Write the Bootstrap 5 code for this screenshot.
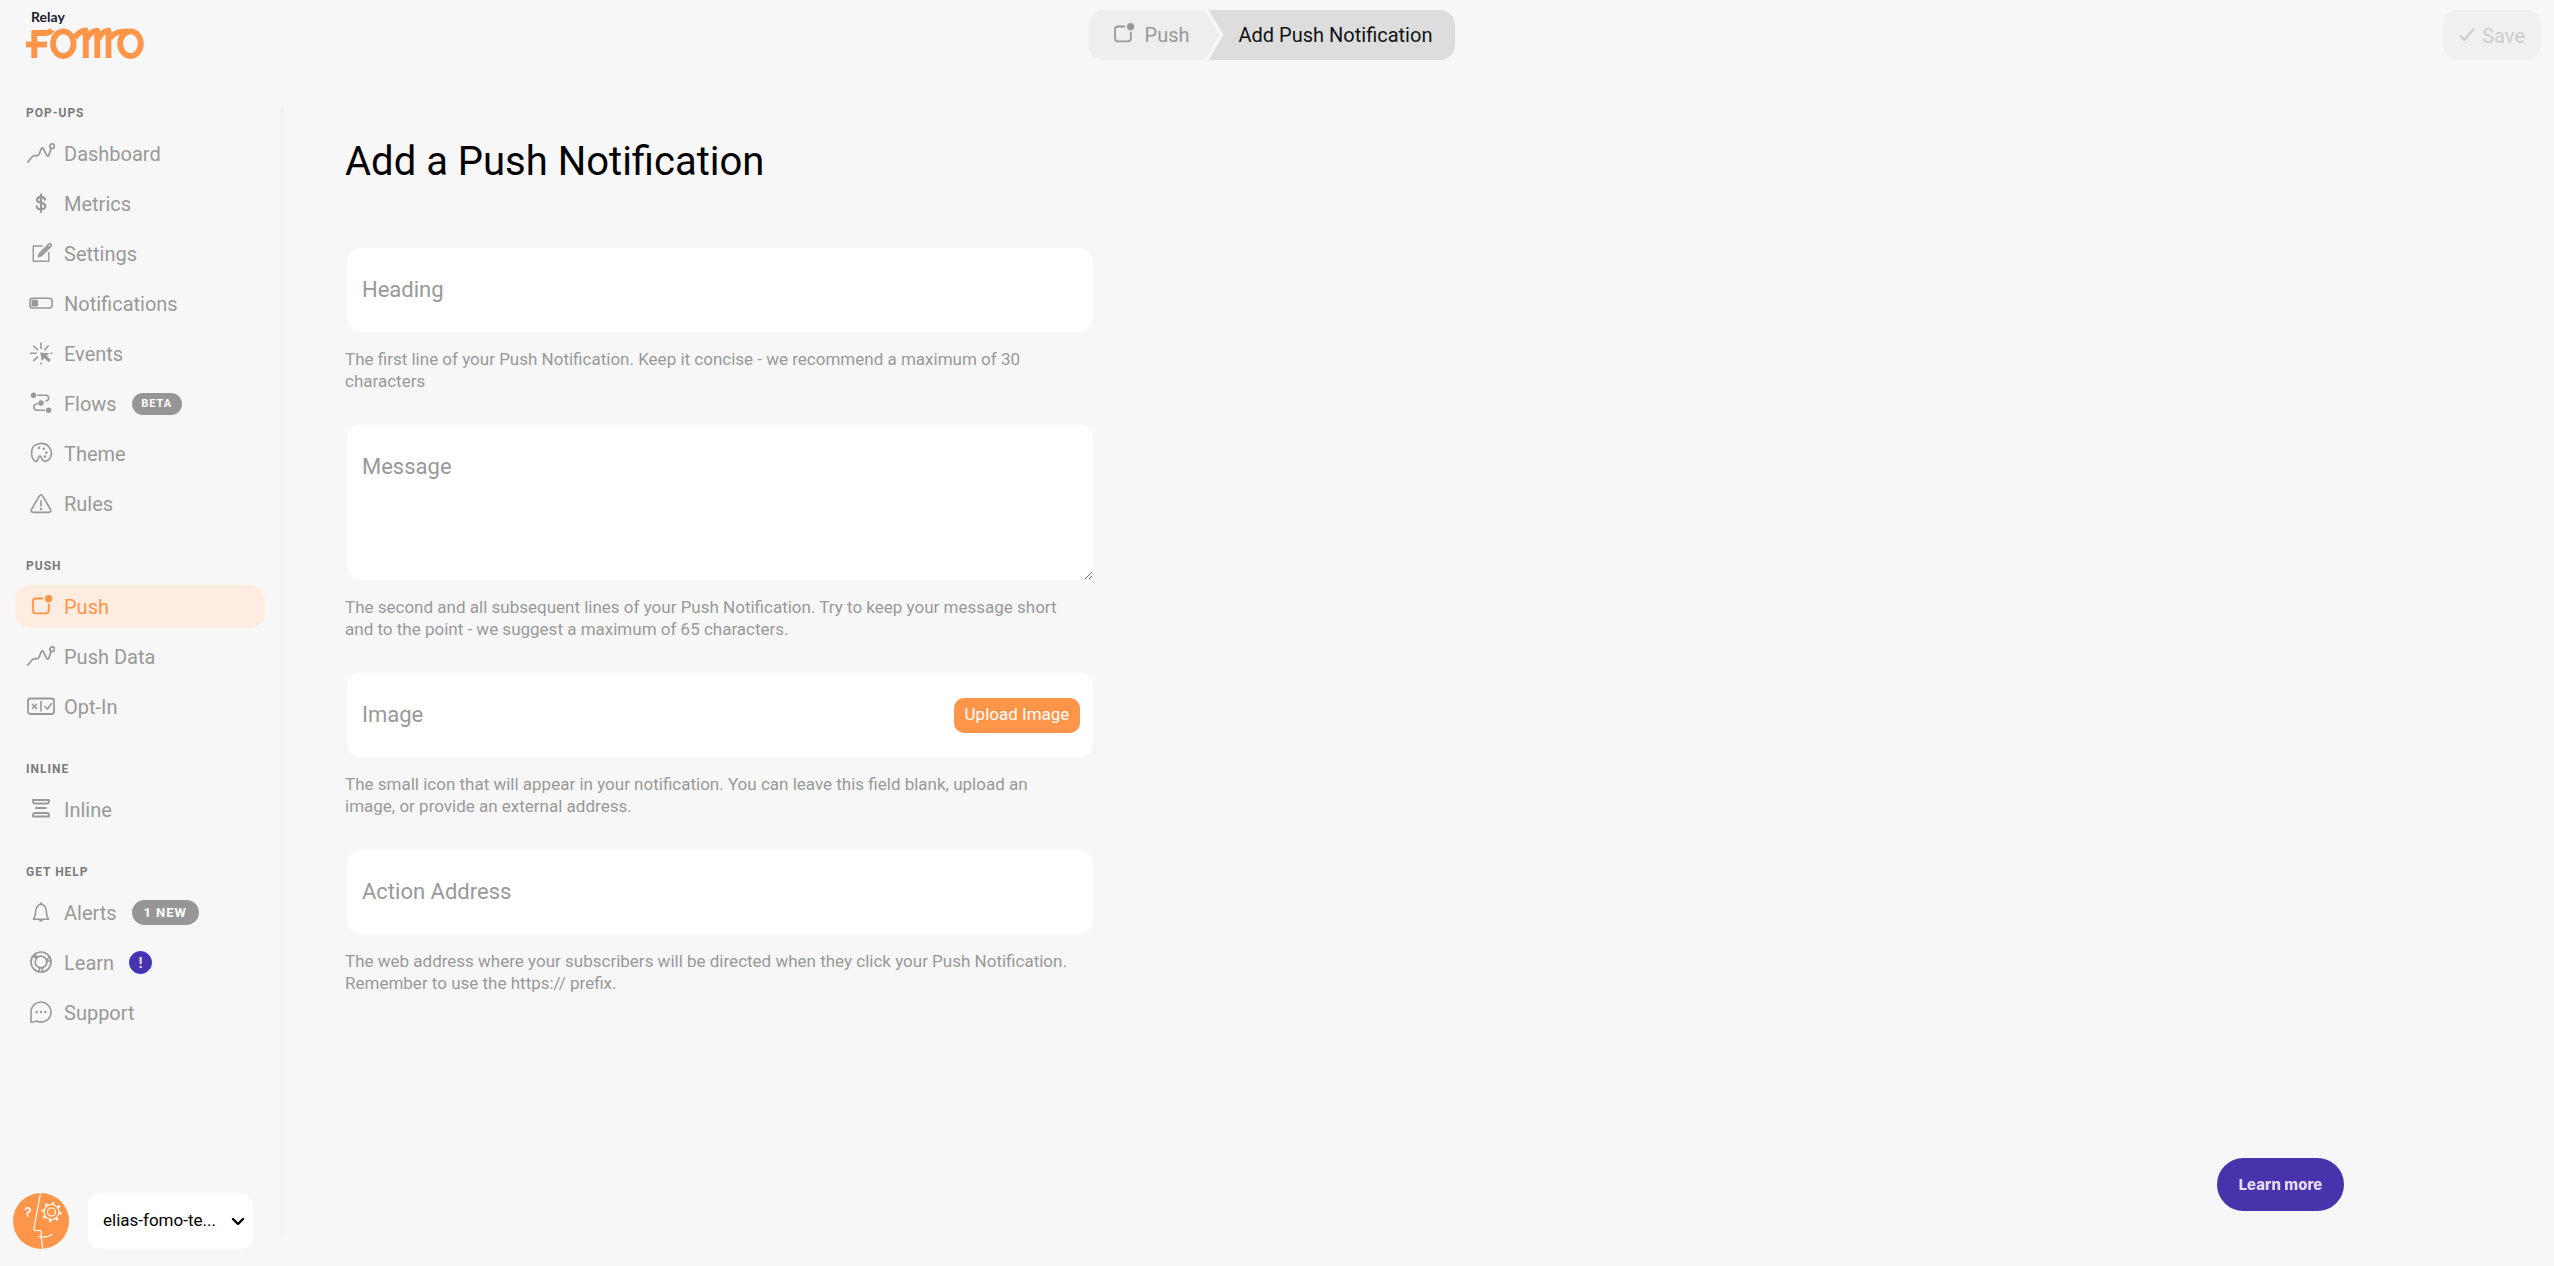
<!DOCTYPE html>
<html lang="en">
<head>
<meta charset="utf-8">
<meta name="viewport" content="width=device-width, initial-scale=1">
<title>Add Push Notification</title>
<link rel="stylesheet" href="https://cdn.jsdelivr.net/npm/bootstrap@5.3.0/dist/css/bootstrap.min.css">
<style>
  :root { --page: #f7f7f7; --muted: #999; --brand: #ff9549; --violet: #4733ac; }
  body { background: var(--page); color: #000; font-family: Roboto, "Liberation Sans", sans-serif; font-size: 20px; }
  svg { fill: none; stroke: currentColor; stroke-width: 2; stroke-linecap: round; stroke-linejoin: round; flex: none; overflow: visible; }
  .solid { fill: currentColor; stroke: none; }

  .topbar { display: grid; grid-template-columns: 1fr auto 1fr; align-items: start; height: 75px; padding: 10px 13px 0 3px; border-bottom: 2px solid #f2f2f2; }
  .brand-link { padding-left: 23px; width: max-content; color: #1b1b2b; }
  .brand-sub { font: 700 14px/14px Lato, sans-serif; padding-left: 5px; }
  .brand-link svg { display: block; color: var(--brand); margin-top: 3px; }

  .crumb { display: flex; align-items: center; height: 50px; line-height: 50px; text-decoration: none; }
  .crumb-parent { color: var(--muted); background: #eee; padding: 0 30px 0 23px; gap: 7px; border-radius: 15px 0 0 15px; clip-path: polygon(0 0, calc(100% - 15px) 0, 100% 50%, calc(100% - 15px) 100%, 0 100%); }
  .crumb-current { color: #111; background: #ddd; margin-left: -11px; padding: 0 23px 0 30px; border-radius: 0 15px 15px 0; clip-path: polygon(0 0, 100% 0, 100% 100%, 0 100%, 15px 50%); }
  .save-btn, .save-btn:disabled { height: 50px; padding: 2px 16px 0 16px; border: 0; border-radius: 15px; background: #f0f0f0; color: #ccc; font-size: 20px; opacity: 1; gap: 7px; }

  .side { position: relative; width: 284px; flex: none; margin: 30px 0 17px; padding: 0 19px 0 15px; }
  .side::after { content: ""; position: absolute; top: 0; right: 0; bottom: 13px; width: 3px; background: #f2f2f2; }
  .side-group { margin-bottom: 33px; }
  .side-title { font-size: 12px; line-height: 17px; font-weight: 700; letter-spacing: 1px; color: #7a7a7a; margin: 0 0 10px 11px; }
  .side-list { display: flex; flex-direction: column; gap: 7px; }
  .side-link { display: flex; align-items: center; gap: 9px; height: 43px; padding: 0 12px; border-radius: 15px; color: var(--muted); line-height: 24px; }
  .side-link:hover { color: #777; }
  .side-link.active { background: #ffece0; color: var(--brand); }
  .pill { display: inline-flex; align-items: center; justify-content: center; margin-left: 6px; border-radius: 15px; background: #969696; color: #fff; font-weight: 700; letter-spacing: 1px; height: 22px; width: 50px; font-size: 11px; }
  .pill-lg { height: 25px; width: 67px; font-size: 13px; }
  .pill-dot { width: 23px; background: var(--violet); border: 1px solid #2a35f0; letter-spacing: 0; height: 23px; font-size: 15px; color: #e4dcf7; }

  .avatar { width: 56px; height: 56px; flex: none; border: 0; border-radius: 50%; background: var(--brand); color: #fff; margin-left: -2px; }
  .avatar svg { stroke-width: 1.2; }
  .site-picker { width: 165px; margin-left: 19px; }
  .site-picker select { width: 100%; height: 56px; border: 0; border-radius: 13px; background: #fff; color: #000; padding: 0 32px 0 15px; font-size: 17px; appearance: none; text-overflow: ellipsis; }
  .site-picker svg { position: absolute; right: 9px; top: 25px; pointer-events: none; }

  .work { padding: 63px 61px 0; }
  .work h1 { font-size: 40px; line-height: 48px; font-weight: 400; margin: 0 0 60px; }
  .push-form { max-width: 750px; }
  .field { margin-bottom: 31px; }
  .field .form-control { height: 88px; padding: 30px 15px 10px; border: 2px solid var(--page); border-radius: 16px; background: #fff; font-size: 22px; }
  .field textarea.form-control { height: 159px; resize: vertical; }
  .field .form-floating > label { height: 88px; padding: 0 17px; border: 0; display: flex; align-items: center; font-size: 22px; line-height: 26px; color: var(--muted); }
  .help { max-width: 732px; margin: 14px 0 0; color: var(--muted); font-size: 17px; line-height: 22px; }
  .upload-btn { position: absolute; right: 15px; top: 27px; width: 126px; height: 35px; padding: 0 0 3px; border: 0; border-radius: 10px; background: var(--brand); color: #fff; font-size: 17px; line-height: 20px; z-index: 3; }
  .learn-btn { position: fixed; right: 210px; bottom: 55px; width: 127px; height: 53px; border-radius: 27px; background: var(--violet); color: #e4dcf7; font: 800 15px/20px Inter, sans-serif; padding: 0; }
</style>
</head>
<body class="d-flex flex-column min-vh-100">

<svg class="d-none" aria-hidden="true">
  <symbol id="i-chart" viewBox="0 0 28 24"><path d="M.8 20 5 15q1.300-1.500 3-1.300l1.500.2q1.800.2 2.500-1.600l2.200-5.300q1-2.200 2.200-.2l3.300 6.500q1.300 1.800 2.300-.4L24 6.500" stroke-width="1.700"/><circle cx="25.200" cy="4.200" r="2.300" stroke-width="1.700"/></symbol>
  <symbol id="i-dollar" viewBox="0 0 28 24"><path d="M18 7.600q-.6-2.700-4-2.700t-4 2.900q0 2.400 4.100 3.100t4.300 3.400q-.2 3-4.400 3T9.700 14.300M14 2.500V20" stroke-width="2.200"/></symbol>
  <symbol id="i-edit" viewBox="0 0 28 24"><path d="M15 4H6.300v15.200h15.400v-8.500M11.500 14.800l.9-3.300L21.800 2q1-.8 2 .1t.2 2l-9.400 9.400zM13.500 12.800 21.500 4.500" stroke-width="1.500"/></symbol>
  <symbol id="i-toggle" viewBox="0 0 28 24"><rect x="3" y="6.200" width="22" height="9.800" rx="2.500" stroke-width="1.600"/><rect class="solid" x="4.500" y="7.700" width="6.500" height="6.800" rx="1"/></symbol>
  <symbol id="i-burst" viewBox="0 0 28 24"><path d="M14 1v5.500M3.500 11.300H9M6.700 4l3.800 3.800M21.300 4l-3.700 3.800M6.700 18.600l3.800-3.700" stroke-width="1.600"/><path class="solid" d="m13.200 10.400 9.300 1-2.900 2.400 4.200 4.300-2.200 2.100-4.200-4.200-2.600 2.800z"/><circle class="solid" cx="24.500" cy="11.200" r="1"/><circle class="solid" cx="14" cy="21.500" r="1"/></symbol>
  <symbol id="i-flow" viewBox="0 0 28 24"><path d="M11 3.300h8q2.600.2 2.600 2.600t-2.400 3M10.500 11.700q-3.700.3-3.700 3.200t3.200 3.300h7.500" stroke-width="1.600"/><g class="solid"><circle cx="6.500" cy="3.300" r="2.700"/><circle cx="14" cy="11" r="2.700"/><circle cx="21.600" cy="18.200" r="2.700"/></g></symbol>
  <symbol id="i-palette" viewBox="0 0 28 24"><path d="M8.300 19.200Q4.600 17 4.600 11t3.600-7.900T15 1.400q5.500.5 8 5t.6 8.500-6 4.400q-1.600-.4-2.300-1.900l-1.500-2.700q-.9-1.400-1.800-.1l-1.200 3.200q-.8 2.200-2.500 1.400z" stroke-width="1.600"/><g class="solid"><circle cx="12" cy="5.700" r="1.300"/><circle cx="16.800" cy="6.700" r="1.300"/><circle cx="19.300" cy="10.600" r="1.300"/><circle cx="18" cy="14.600" r="1.300"/></g></symbol>
  <symbol id="i-warn" viewBox="0 0 28 24"><path d="M12.200 4.200q1.800-2.700 3.600 0l7.700 13.300q1 2.500-1.500 2.900H6q-2.500-.4-1.500-2.900zM14 8.800v5.200" stroke-width="1.600"/><circle class="solid" cx="14" cy="17" r="1.200"/></symbol>
  <symbol id="i-push" viewBox="0 0 28 24"><path d="M15.500 3.500H8.800Q6 3.500 6 6.300v9.200q0 2.800 2.800 2.800H19q2.800 0 2.800-2.800V9.500" stroke-width="1.800"/><circle class="solid" cx="21.600" cy="3.700" r="3.600"/></symbol>
  <symbol id="i-optin" viewBox="0 0 28 24"><rect x="1" y="3.500" width="26" height="15.500" rx="2.500" stroke-width="1.800"/><path d="m5.300 9.300 4.200 4.200m0-4.200-4.200 4.200M14 6.500V16M18 11.500l2.500 2.500 4-5.300" stroke-width="1.600"/></symbol>
  <symbol id="i-inline" viewBox="0 0 28 24"><path d="M6 2h16v1.500Q22 5.500 20 5.500H8Q6 5.500 6 3.500zM9 10h10M6 18.500h16V17q0-2-2-2H8q-2 0-2 2z" stroke-width="1.800"/></symbol>
  <symbol id="i-bell" viewBox="0 0 28 24"><path d="M6.500 18.300h15q-2-3-2-6 0-8-5.500-9-5.500 1-5.500 9 0 3-2 6z" stroke-width="1.600"/><path class="solid" d="M11.500 18.500h5q-.8 2.300-2.500 2.300t-2.500-2.300zM12.500 3a1.500 1.800 0 0 1 3 0z"/></symbol>
  <symbol id="i-ring" viewBox="0 0 28 24"><circle cx="14" cy="11" r="10" stroke-width="1.700"/><circle cx="14" cy="11" r="5.800" stroke-width="1.700"/><path d="M5.200 5.700q3-.3 4.200 1.300M7.800 3.300q.7 2.700 3.300 2.600M23.300 6.500q-2.500.3-3.700 3M23.900 9.800q-3-.2-4.100 1.800M11.500 20.500q1.500-1.500.9-3.900M15.500 20.800q-.6-1.900.3-4.200" stroke-width="1.600"/></symbol>
  <symbol id="i-chat" viewBox="0 0 28 24"><path d="M4 21.300V11a10 10 0 1 1 5.500 9l-2 .7z" stroke-width="1.600"/><g class="solid"><circle cx="9.700" cy="11" r="1.200"/><circle cx="14" cy="11" r="1.200"/><circle cx="18.300" cy="11" r="1.200"/></g></symbol>
</svg>

<header class="topbar">
  <a class="brand-link text-decoration-none" href="#" aria-label="Relay Fomo home">
    <div class="brand-sub">Relay</div>
    <svg width="118" height="33" viewBox="26 27 118 33" aria-hidden="true">
      <g stroke-linecap="butt" stroke-width="5.800">
        <path d="M34.300 58V33.500"/><path d="M31.500 33h14q4.500 0 6.500-3.200"/><path d="M26 44.500h21"/>
        <ellipse cx="63.300" cy="43.700" rx="10.300" ry="12.300"/>
        <path d="M75 38q3-6.500 10.800-7.500V58" /><path d="M87 39q3-7.500 10.300-8.500V58"/><path d="M98.500 39q3-7.500 10-8.500V58"/><path d="M110 38.500q4-7.500 18-7"/>
        <ellipse cx="130.500" cy="43.700" rx="10.300" ry="12.300"/>
      </g>
    </svg>
  </a>
  <nav class="d-flex" aria-label="Breadcrumb">
    <a class="crumb crumb-parent" href="#"><svg width="26" height="24" viewBox="3 0 26 24"><use href="#i-push" width="28" height="24"/></svg>Push</a>
    <span class="crumb crumb-current" aria-current="page">Add Push Notification</span>
  </nav>
  <button class="btn save-btn d-flex align-items-center ms-auto" type="button" disabled>
    <svg width="16" height="18" viewBox="0 0 16 18"><path d="m1.500 9 4 4 9-11"/></svg>Save
  </button>
</header>

<div class="d-flex flex-grow-1">
  <aside class="side d-flex flex-column">
    <nav aria-label="Main">
      <div class="side-group">
        <h2 class="side-title">POP-UPS</h2>
        <div class="side-list">
          <a class="side-link text-decoration-none" href="#"><svg width="28" height="24"><use href="#i-chart"/></svg>Dashboard</a>
          <a class="side-link text-decoration-none" href="#"><svg width="28" height="24"><use href="#i-dollar"/></svg>Metrics</a>
          <a class="side-link text-decoration-none" href="#"><svg width="28" height="24"><use href="#i-edit"/></svg>Settings</a>
          <a class="side-link text-decoration-none" href="#"><svg width="28" height="24"><use href="#i-toggle"/></svg>Notifications</a>
          <a class="side-link text-decoration-none" href="#"><svg width="28" height="24"><use href="#i-burst"/></svg>Events</a>
          <a class="side-link text-decoration-none" href="#"><svg width="28" height="24"><use href="#i-flow"/></svg>Flows <span class="pill">BETA</span></a>
          <a class="side-link text-decoration-none" href="#"><svg width="28" height="24"><use href="#i-palette"/></svg>Theme</a>
          <a class="side-link text-decoration-none" href="#"><svg width="28" height="24"><use href="#i-warn"/></svg>Rules</a>
        </div>
      </div>
      <div class="side-group">
        <h2 class="side-title">PUSH</h2>
        <div class="side-list">
          <a class="side-link active text-decoration-none" href="#" aria-current="page"><svg width="28" height="24"><use href="#i-push"/></svg>Push</a>
          <a class="side-link text-decoration-none" href="#"><svg width="28" height="24"><use href="#i-chart"/></svg>Push Data</a>
          <a class="side-link text-decoration-none" href="#"><svg width="28" height="24"><use href="#i-optin"/></svg>Opt-In</a>
        </div>
      </div>
      <div class="side-group">
        <h2 class="side-title">INLINE</h2>
        <div class="side-list">
          <a class="side-link text-decoration-none" href="#"><svg width="28" height="24"><use href="#i-inline"/></svg>Inline</a>
        </div>
      </div>
      <div class="side-group">
        <h2 class="side-title">GET HELP</h2>
        <div class="side-list">
          <a class="side-link text-decoration-none" href="#"><svg width="28" height="24"><use href="#i-bell"/></svg>Alerts <span class="pill pill-lg">1 NEW</span></a>
          <a class="side-link text-decoration-none" href="#"><svg width="28" height="24"><use href="#i-ring"/></svg>Learn <span class="pill pill-dot">!</span></a>
          <a class="side-link text-decoration-none" href="#"><svg width="28" height="24"><use href="#i-chat"/></svg>Support</a>
        </div>
      </div>
    </nav>
    <div class="d-flex mt-auto">
      <button class="avatar p-0" type="button" aria-label="Account">
        <svg class="d-block" width="56" height="56" viewBox="0 0 56 56">
          <path d="M27.500 0 21 35q-.5 2.500 2 2.500l4 .2q1.500.3 1.300 2.300l-.3 3 1.800 13M26 43.500q7 2 13-2"/>
          <path d="M12.500 16.500q.5-2 2.500-1.800t2 2.300-2.500 2.700v1.800M14.500 22.800v.4" stroke-width="1.600"/>
          <circle cx="38.500" cy="19" r="4"/><circle cx="38.500" cy="19" r="7.500"/>
          <circle cx="38.500" cy="19" r="9" stroke-width="2.200" stroke-dasharray="2.400 4.669" stroke-linecap="butt"/>
        </svg>
      </button>
      <div class="site-picker position-relative">
        <select aria-label="Site"><option>elias-fomo-te...</option></select>
        <svg width="12" height="8" viewBox="0 0 12 8"><path d="m1 1 5 5 5-5" stroke-width="2.400"/></svg>
      </div>
    </div>
  </aside>

  <main class="work flex-grow-1">
    <h1>Add a Push Notification</h1>
    <form class="push-form">
      <div class="field">
        <div class="form-floating">
          <input class="form-control" type="text" id="heading" placeholder=" " aria-describedby="heading-help">
          <label for="heading">Heading</label>
        </div>
        <p class="help" id="heading-help">The first line of your Push Notification. Keep it concise - we recommend a maximum of 30 characters</p>
      </div>
      <div class="field">
        <div class="form-floating">
          <textarea class="form-control" id="message" placeholder=" " aria-describedby="message-help"></textarea>
          <label for="message">Message</label>
        </div>
        <p class="help" id="message-help">The second and all subsequent lines of your Push Notification. Try to keep your message short and to the point - we suggest a maximum of 65 characters.</p>
      </div>
      <div class="field">
        <div class="form-floating">
          <input class="form-control" type="text" id="image" placeholder=" " aria-describedby="image-help">
          <label for="image">Image</label>
          <button class="btn upload-btn" type="button">Upload Image</button>
        </div>
        <p class="help" id="image-help">The small icon that will appear in your notification. You can leave this field blank, upload an image, or provide an external address.</p>
      </div>
      <div class="field">
        <div class="form-floating">
          <input class="form-control" type="url" id="action" placeholder=" " aria-describedby="action-help">
          <label for="action">Action Address</label>
        </div>
        <p class="help" id="action-help">The web address where your subscribers will be directed when they click your Push Notification. Remember to use the https:// prefix.</p>
      </div>
    </form>
  </main>
</div>

<button class="btn learn-btn" type="button">Learn more</button>

<script src="https://cdn.jsdelivr.net/npm/bootstrap@5.3.0/dist/js/bootstrap.bundle.min.js"></script>
</body>
</html>
